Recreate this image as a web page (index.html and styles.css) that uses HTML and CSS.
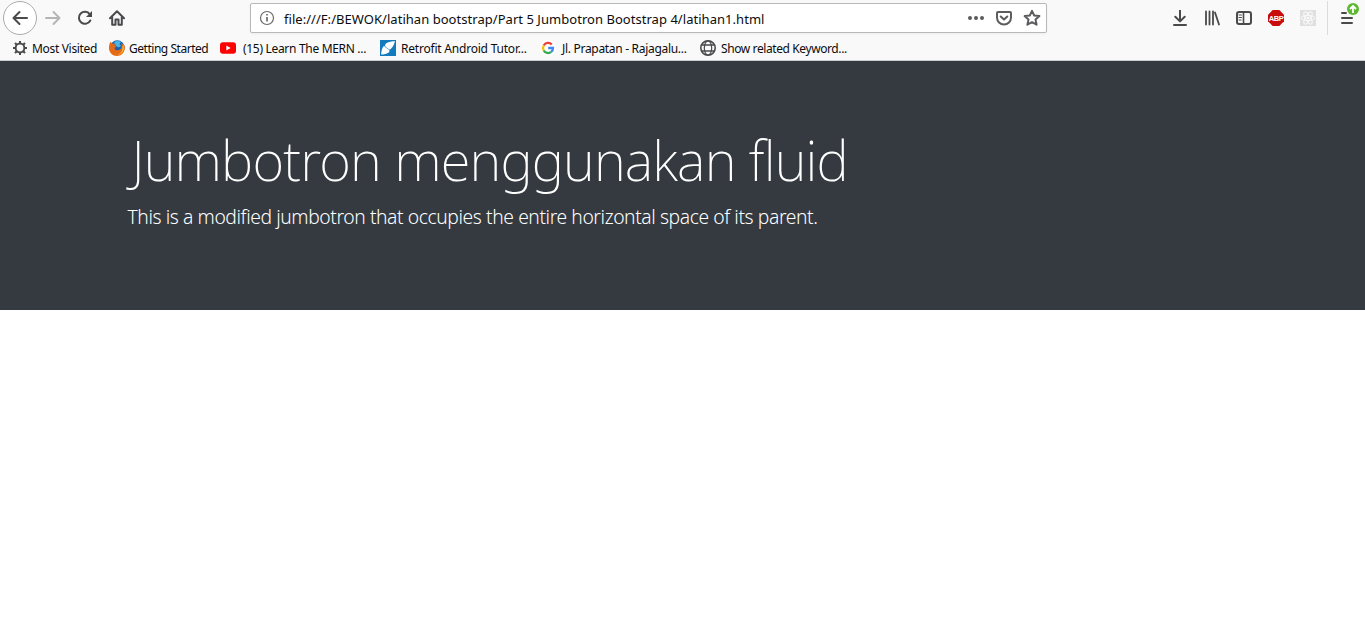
FILE: index.html
```
<!DOCTYPE html>
<html lang="id">
<head>
<meta charset="utf-8">
<title>Jumbotron</title>
<link rel="stylesheet" href="styles.css">
</head>
<body>
<header class="chrome">
  <div class="toolbar">
    <nav class="nav">
      <span class="back"><svg width="16" height="16" viewBox="0 0 16 16" class="ico"><path d="M15 8H1.500M7.500 2L1.500 8l6 6"/></svg></span>
      <svg width="16" height="16" viewBox="0 0 16 16" class="ico faded"><path d="M1 8h13.500M8.500 2l6 6-6 6"/></svg>
      <svg width="16" height="16" viewBox="0 0 16 16" class="ico"><path d="M13.300 10.500A6 6 0 1 1 12.800 4.300"/><path d="M15 1v6H9z" fill="#4a4a4c" stroke="none"/></svg>
      <svg width="16" height="16" viewBox="0 0 16 16" class="ico"><path d="M1 8.300L8 1.300l7 7M3.200 7v7.800h3.300V9.500h3v5.300h3.300V7"/></svg>
    </nav>
    <div class="urlbar">
      <svg class="info" width="16" height="16" viewBox="0 0 16 16"><circle cx="8" cy="8" r="6.500" fill="none" stroke="#6b6b6d" stroke-width="1.200"/><path d="M8 7v4.500M8 4v1.500" stroke="#6b6b6d" stroke-width="1.700"/></svg>
      <span class="url">file:///F:/BEWOK/latihan bootstrap/Part 5 Jumbotron Bootstrap 4/latihan1.html</span>
      <span class="actions">
        <svg width="16" height="16" viewBox="0 0 16 16" fill="#5c5c5e"><circle cx="2" cy="8" r="2"/><circle cx="8" cy="8" r="2"/><circle cx="14" cy="8" r="2"/></svg>
        <svg width="16" height="16" viewBox="0 0 16 16" class="ico soft"><path d="M2 2h12a1 1 0 0 1 1 1v4.500a7 7 0 0 1-14 0V3a1 1 0 0 1 1-1zM4.700 6.500L8 9.600l3.300-3.100"/></svg>
        <svg width="18" height="18" viewBox="0 0 18 18" class="ico soft star"><path d="M9 1.800l2.200 4.700 5.200.6-3.900 3.500 1.100 5.100L9 13.200l-4.600 2.500 1.100-5.100-3.900-3.500 5.200-.6z"/></svg>
      </span>
    </div>
    <div class="tools">
      <svg width="16" height="16" viewBox="0 0 16 16" class="ico"><path d="M8 .5v10.500M3.300 6.800L8 11.400l4.700-4.600M2 15h12"/></svg>
      <svg width="16" height="16" viewBox="0 0 16 16" class="ico"><path d="M2 1.500v13M5.500 1.500v13M9 1.500v13M11 2.500L15 14.500" stroke-width="1.800"/></svg>
      <svg width="16" height="16" viewBox="0 0 16 16" class="ico"><rect x="1" y="2" width="14" height="12" rx="2"/><path d="M7.500 2v12" stroke-width="1.600"/><path d="M3 5h2.500M3 7.500h2.500M3 10h2" stroke-width="1"/></svg>
      <svg width="16" height="16" viewBox="0 0 16 16"><path d="M4.700 0h6.600L16 4.700v6.600L11.300 16H4.700L0 11.300V4.700z" fill="#c80b0b"/><text x="8" y="11" class="abp">ABP</text></svg>
      <svg width="16" height="16" viewBox="0 0 16 16"><path d="M0 0h16v16H0z" fill="#e0e0e0"/><g fill="none" stroke="#fafafa"><ellipse cx="8" cy="8" rx="6.800" ry="2.600"/><ellipse cx="8" cy="8" rx="6.800" ry="2.600" transform="rotate(60 8 8)"/><ellipse cx="8" cy="8" rx="6.800" ry="2.600" transform="rotate(120 8 8)"/></g><circle cx="8" cy="8" r="1.300" fill="#fafafa"/></svg>
    </div>
    <div class="menu"><svg width="22" height="26" viewBox="0 0 22 26"><path d="M2 11h4M2 16h10M2 21h10" stroke="#4a4a4c" stroke-width="2" stroke-linecap="round"/><circle cx="13" cy="7" r="6" fill="#5eb833"/><path d="M13 11V4.500M10 7l3-3 3 3" fill="none" stroke="#fff" stroke-width="1.800"/></svg></div>
  </div>
  <div class="bookmarks">
    <a class="bm b1"><svg width="16" height="16" viewBox="0 0 16 16" fill="none" stroke="#4a4a4c"><circle cx="8" cy="8" r="4.400" stroke-width="2"/><path d="M8 1v2.500M8 12.500v2.500M1 8h2.500M12.500 8h2.500M3 3l1.800 1.800M11.200 11.200l1.800 1.800M13 3l-1.800 1.800M4.800 11.200L3 13" stroke-width="2"/></svg><span>Most Visited</span></a>
    <a class="bm b2"><svg width="16" height="16" viewBox="0 0 16 16"><circle cx="8.300" cy="7.600" r="7.300" fill="#1b5fae"/><path d="M5 2.500C7 .5 10 .6 12 2L10.500 4 12 6 9.500 7.500 7 6z" fill="#48b5e5"/><path d="M1.300 1.800L3.200 3.500 6 3.800 5.400 5.300 7.500 6.300 5.500 8c.2 2.500 3.700 3 5.800 1.300 1.600-1.300 1.800-3.900.8-6.300 2 1.200 2.700 2.500 2.800 3.500l.5-1.500C17.100 11 13 16 8 16 3.500 16 0 12.500 0 8c0-2.500.5-4.300 1.300-6.200z" fill="#e66a16"/><path d="M14 4c2.500 5-.5 10.500-5.500 11 3-1.300 4.800-3.500 4.800-6.500z" fill="#fbb829"/></svg><span>Getting Started</span></a>
    <a class="bm b3"><svg width="16" height="16" viewBox="0 0 16 16"><rect y="2.300" width="16" height="11.400" rx="3" fill="#f00"/><path d="M6.300 5.500v5L10.700 8z" fill="#fff"/></svg><span>(15) Learn The MERN ...</span></a>
    <a class="bm b4"><svg width="16" height="16" viewBox="0 0 16 16"><path d="M0 0h16v16H0z" fill="#127bbd"/><path d="M15 1.200C9.500 1.300 5 3 5 5.500c0 2 3.300 2.700 4.800 4.300C11.500 8.500 14 5.500 15 1.200zM4 5.800C2 8 1.200 11 1.200 14.600c4-.1 8.300-1.300 8.300-3.600C9.300 8.900 5.300 8.200 4 5.800z" fill="#fff"/></svg><span>Retrofit Android Tutor...</span></a>
    <a class="bm b5"><svg width="16" height="16" viewBox="0 0 16 16" fill="none" stroke-width="2.300"><circle cx="8" cy="8" r="8" fill="#fff"/><path d="M11.800 4.500A5 5 0 0 0 3.700 5.500" stroke="#ea4335"/><path d="M3.700 5.500a5 5 0 0 0 0 5" stroke="#fbbc05"/><path d="M3.700 10.500a5 5 0 0 0 7.500 1.400" stroke="#34a853"/><path d="M11.200 11.900A5 5 0 0 0 13 8H8.200" stroke="#4285f4"/></svg><span>Jl. Prapatan - Rajagalu...</span></a>
    <a class="bm b6"><svg width="16" height="16" viewBox="0 0 16 16" fill="none" stroke="#4a4a4c"><circle cx="8" cy="8" r="7.200" stroke-width="1.600"/><ellipse cx="8" cy="8" rx="3.700" ry="7.200" stroke-width="1.200"/><path d="M1.800 5h12.400M1.800 11h12.400" stroke-width="1.400"/></svg><span>Show related Keyword...</span></a>
  </div>
</header>
<main class="jumbotron">
  <h1 class="display">Jumbotron menggunakan fluid</h1>
  <p class="lead">This is a modified jumbotron that occupies the entire horizontal space of its parent.</p>
</main>
</body>
</html>
```
FILE: styles.css
```
* { box-sizing: border-box; }
body { margin: 0; background: #fff; font-family: "Noto Sans", "Open Sans", sans-serif; }
svg { display: block; flex: none; }
.chrome { height: 61px; background: #f9f9fa; border-bottom: 1px solid #ccccce; }
.toolbar { display: flex; height: 36px; }
.nav { display: flex; align-items: center; width: 250px; padding-left: 3px; gap: 16px; }
.back { display: flex; align-items: center; justify-content: center; width: 34px; height: 34px; margin-right: -8px; border: 1px solid #ababad; border-radius: 50%; background: #fff; }
.ico { fill: none; stroke: #4a4a4c; stroke-width: 2; stroke-linejoin: round; stroke-linecap: round; }
.faded { stroke: #b5b5b6; }
.soft { stroke: #5c5c5e; }
.urlbar { display: flex; align-items: center; width: 797px; height: 30px; margin-top: 3px; padding: 0 6px 0 8px; border: 1px solid #b8b8ba; border-radius: 2px; background: #fff; box-shadow: 0 1px 3px rgba(0, 0, 0, .05); }
.url { margin-left: 9px; padding-top: 2px; font-size: 13px; line-height: 18px; letter-spacing: .04px; white-space: nowrap; color: #0c0c0d; }
.actions { display: flex; align-items: center; gap: 12px; margin-left: auto; }
.star { margin-left: -1px; margin-right: -1px; }
.tools { display: flex; align-items: center; gap: 16px; margin-left: 125px; }
.abp { fill: #fff; font: bold 7.500px "Liberation Sans", sans-serif; letter-spacing: -.4px; text-anchor: middle; }
.menu { width: 38px; height: 34px; margin-top: 1px; margin-left: 11px; padding: 1px 0 0 12px; border-left: 1px solid #dcdcdd; }
.bookmarks { display: flex; height: 24px; padding-left: 12px; align-items: center; }
.bm { display: flex; align-items: center; gap: 4px; flex: none; font-size: 12px; line-height: 16px; white-space: nowrap; color: #0c0c0d; }
.bm span { padding-top: 2px; margin-bottom: 0; }
.bm svg { margin-top: 0; }
.b1 { width: 97px; letter-spacing: -.32px; }
.b2 { width: 111px; letter-spacing: -.47px; }
.b3 { width: 160px; gap: 7px; letter-spacing: -.31px; }
.b4 { width: 160px; gap: 5px; letter-spacing: -.21px; }
.b5 { width: 160px; gap: 6px; letter-spacing: -.3px; }
.b6 { width: 160px; gap: 5px; letter-spacing: -.4px; }
.jumbotron { height: 249px; padding: 66px 127.500px 62px; background: #343a40; color: #fff; }
.display { margin: 0 0 8px; padding-left: 4px; font-size: 54.500px; font-weight: 200; line-height: 67px; letter-spacing: -.85px; white-space: nowrap; }
.lead { margin: 0 0 16px; font-size: 19.300px; font-weight: 300; line-height: 30px; letter-spacing: -.41px; white-space: nowrap; }
```
